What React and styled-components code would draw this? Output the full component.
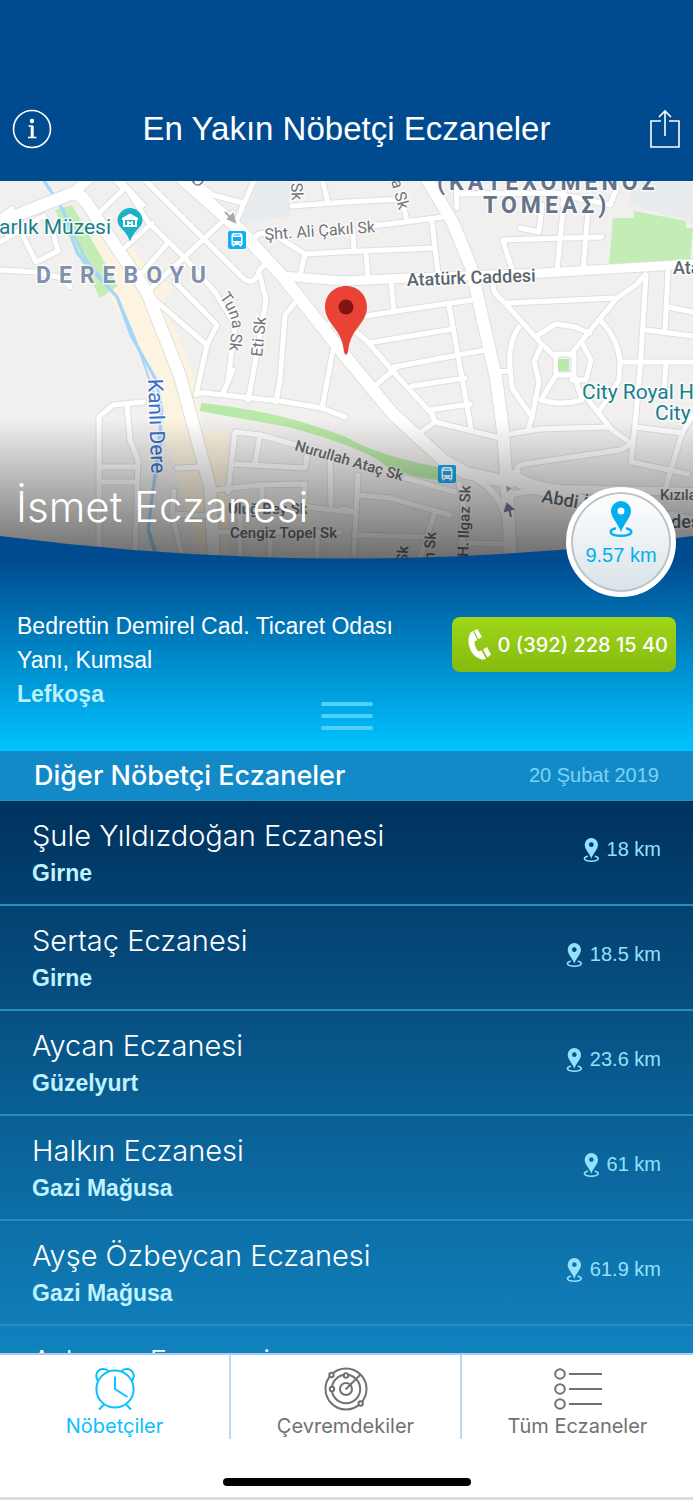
import React from "react"
import styled, { createGlobalStyle } from "styled-components"

const pharmacies = [
  { name: "Şule Yıldızdoğan Eczanesi", city: "Girne", distance: "18 km" },
  { name: "Sertaç Eczanesi", city: "Girne", distance: "18.5 km" },
  { name: "Aycan Eczanesi", city: "Güzelyurt", distance: "23.6 km" },
  { name: "Halkın Eczanesi", city: "Gazi Mağusa", distance: "61 km" },
  { name: "Ayşe Özbeycan Eczanesi", city: "Gazi Mağusa", distance: "61.9 km" },
  { name: "Aykanur Eczanesi", city: "Gazi Mağusa", distance: "62 km" },
]

// [width, path]
const roads = [
  [5, "M0 270 L35 272 L62 278 L70 287"],
  [5, "M0 217 L12 209"],
  [5, "M22 234 L36 262 L58 251 L52 228 L44 216"],
  [5, "M0 242 L40 218"],
  [5, "M100 212 L124 189 L114 178"],
  [5, "M128 190 L148 222 L184 257 L215 292 L235 325 L228 380"],
  [5, "M118 178 L143 205"],
  [5, "M143 178 L203 238 L244 279 Q255 286 259 271 L264 265"],
  [5, "M190 178 L213 195 L243 203"],
  [5, "M255 178 L236 222"],
  [5, "M122 250 L152 223 M140 275 L166 245 M147 292 L222 222 L233 213"],
  [5, "M150 296 L207 345 L217 325 L175 282"],
  [5, "M207 345 L196 395 Q197 391 214 394 L280 401 L322 408 L345 417"],
  [5, "M260 275 L266 300 L252 380 L248 400 M233 370 L223 393"],
  [5, "M322 178 L328 203 M292 206 L347 202 L402 199"],
  [5, "M255 237 Q262 229 279 238 L305 254 L340 252 L434 248 M305 254 L300 276"],
  [5, "M372 226 L405 222 L443 217 M402 200 L407 221"],
  [5, "M353 230 L354 252 M366 252 L368 278 M432 222 L438 273"],
  [5, "M391 283 L394 312 M325 325 L343 322 M366 316 L410 309 L472 300"],
  [5, "M294 304 L285 315 L280 380 L276 402 M333 350 L322 408"],
  [5, "M449 305 L457 350 L471 428 M368 343 L453 329 M394 367 L485 350"],
  [5, "M347 325 L366 340 L397 376 L432 414 L435 422 L421 432"],
  [5, "M376 385 L397 367 M412 386 L465 378 M430 410 L470 404 M435 422 L500 438"],
  [5, "M503 240 L567 238 L602 237 M503 241 L513 272"],
  [5, "M563 211 L557 270 M588 211 L583 270 M520 228 L539 232 L542 205"],
  [5, "M456 183 L457 208 M457 194 L555 193 L610 205 L617 188 M565 178 L563 205"],
  [5, "M493 283 Q492 293 503 301 L540 342 L556 358"],
  [5, "M506 303 L615 298 M645 275 L637 284 L617 298 L570 355"],
  [5, "M646 275 L640 370 L635 425 L631 462 L688 474"],
  [5, "M668 272 L665 330 M668 307 L693 312 M646 330 L693 336 M620 362 L693 362 M666 362 L664 390"],
  [5, "M519 327 Q508 342 510 368 L512 388 L532 417"],
  [5, "M601 321 Q618 339 620 362 L619 380 L600 410"],
  [5, "M535 337 L556 324 L575 327 L590 333"],
  [5, "M541 346 L534 362 L539 382 L532 417 L528 430 M582 343 L591 360 L586 380 L572 380"],
  [5, "M556 354 H574 V375 H556 Z M556 375 L541 400 Q560 406 582 400 L574 375 M582 392 L612 430 L632 444"],
  [5, "M496 372 L510 371 M504 435 L540 429 L609 427 M635 427 L683 433"],
  [5, "M518 471 Q515 466 525 464 L620 450 L631 444 M693 415 L682 433 L665 490"],
  [5, "M99 550 L99 417 L113 405 L144 402 M127 405 L130 440 L138 460 L135 550 M99 467 H136 M99 482 H136"],
  [5, "M177 468 L202 467 M174 491 L172 515 L182 555 M173 514 L210 516"],
  [5, "M228 492 L235 432 L260 435 L296 445 M260 435 L255 464 M233 464 L305 468 L308 450 M215 490 L260 485 L305 484 L304 508"],
  [5, "M262 487 V510 M308 507 L350 512 M210 532 H340 M240 512 V558 M270 535 V558 M317 533 V558"],
  [5, "M330 455 L331 505 M358 475 L354 555 M343 509 L355 512 M357 495 L390 498 L450 515 M354 535 L425 537 M434 515 L420 558"],
  [5, "M405 478 L455 492 M459 484 L463 495 L462 558 M460 543 L508 544"],
  [6, "M470 475 Q500 490 506 520 M508 495 L545 488"],
  [12, "M0 222 L68 195 Q78 190 86 202 L115 245 L147 292 L180 376 L196 435 L210 487 L214 560"],
  [10, "M72 194 L92 176"],
  [12, "M177 174 L240 230 L283 277 L350 362 L393 414 L443 460 L466 473 L508 482"],
  [9, "M283 276 L343 281 L410 278 L543 273 L643 267 L693 264"],
  [12, "M424 174 L453 223 L471 267 L496 378 L503 430 L506 473 L511 560"],
  [8, "M506 478 L533 490 L600 502 L693 520 M514 474 Q530 486 560 489 L693 492"],
]

const Bus = ({ x, y }) => (
  <g transform={`translate(${x} ${y})`}>
    <rect width="18" height="18" rx="2" fill="#12aef5" />
    <path
      fill="#fff"
      fillRule="evenodd"
      d="M6 2h6q2.500 0 2.500 2.500V14h-1v1.500h-2V14h-5v1.500h-2V14h-1V4.500Q3.500 2 6 2zM5 6v4h8V6zM6 3.500v1h6v-1zM5 11.500v1.300h1.600v-1.300zM11.400 11.500v1.300H13v-1.300z"
    />
  </g>
)

const MapDrawing = () => (
  <MapSvg viewBox="0 181 693 378" preserveAspectRatio="xMidYMid slice">
    <rect x="0" y="181" width="693" height="378" fill="#f1f0ef" />
    <path fill="#e8ecef" d="M258 181h32v35l-50 9zM633 181l-4 24 57 15 7 5v-44z" />
    <path fill="#fcf3e0" d="M88 240l20-12 24 20 16 20 25 20-10 11 32 81 8 51 25 1v128h-26l-45-148-26-80-30-50z" />
    <path fill="#c3edb4" d="M55 210l17-5 46 81-18 12zM613 218h21v-7l52 10v7h7l-3 32-81 5z" />
    <path fill="#b9e9a8" d="M201 403q75 7 145 34 30 18 92 30v13q-30-3-52-14-20-18-98-39l-88-16z" />
    <g fill="none" stroke="#a3d5fd" strokeWidth="3">
      <path d="M43 179l20 31 14 43 40 44 14 38 25 45 6 30-4 40-10 80 9 30" />
      <path d="M63 210l22 48 33 40 16 38 26 74 2 30-11 65-2 25 10 30" strokeWidth="2" />
    </g>
    <g fill="none" strokeLinecap="round" strokeLinejoin="round">
      <g stroke="#dfdfdf">
        {roads.map(([width, d]) => (
          <path key={d} d={d} strokeWidth={width + 2} />
        ))}
      </g>
      <g stroke="#fff">
        {roads.map(([width, d]) => (
          <path key={d} d={d} strokeWidth={width} />
        ))}
      </g>
    </g>
    <rect x="558" y="359" width="11" height="12" fill="#b9e9a8" />
    <g stroke="#aaa" strokeWidth="2" fill="#aaa">
      <path d="M225 212l7 7" />
      <path d="M235 222l-2-8-5 5z" />
    </g>
    <g stroke="#7d7d99" strokeWidth="2" fill="#7d7d99">
      <path d="M511 517l-2-9" />
      <path d="M507 504l-2 7 8-2z" />
    </g>
    <path d="M506 486l6 2-5 4z" fill="#aaa" />
    <Bus x={228} y={231} />
    <Bus x={438} y={465} />

    <MapText fill="#8190ad" $size={23} $weight={700} $spacing={8}>
      <text x="36" y="283">DEREBOYU</text>
    </MapText>
    <MapText fill="#667389" $size={23} $weight={700} $spacing={4}>
      <text x="437" y="190">(ΚΑΤΕΧΟΜΕΝΟΣ</text>
      <text x="483" y="213">ΤΟΜΕΑΣ)</text>
    </MapText>
    <MapText fill="#18808a" $size={21} $weight={400}>
      <text x="111" y="234" textAnchor="end">Barbarlık Müzesi</text>
      <text x="582" y="399">City Royal Hotel</text>
      <text x="655" y="420">City Royal</text>
    </MapText>
    <MapText fill="#5a6670" $size={18} $weight={500}>
      <text transform="translate(407 286) rotate(-2)">Atatürk Caddesi</text>
      <text x="673" y="274">Atatürk</text>
      <text transform="translate(541 502) rotate(10)">Abdi İpekçi</text>
      <text x="671" y="528">desi</text>
    </MapText>
    <path id="tuna" d="M219 297 Q231 312 232 326 L229 352" fill="none" />
    <MapText fill="#70757a" $size={16} $weight={400}>
      <text transform="translate(265 240) rotate(-4)">Şht. Ali Çakıl Sk</text>
      <text>
        <textPath href="#tuna">Tuna Sk</textPath>
      </text>
      <text transform="translate(262 357) rotate(-84)">Eti Sk</text>
      <text transform="translate(291 183) rotate(87)">Sk</text>
      <text transform="translate(391 181) rotate(75)">a Sk</text>
      <text transform="translate(191 181) rotate(45)">D</text>
    </MapText>
    <MapText fill="#666b70" $size={15} $weight={500} $halo={0.3}>
      <text transform="translate(294 450) rotate(16)">Nurullah Ataç Sk</text>
      <text x="228" y="514">Uluğ Bey Sk</text>
      <text x="230" y="538">Cengiz Topel Sk</text>
      <text x="660" y="500">Kızılay</text>
      <text transform="translate(468 557) rotate(-88)">H. Ilgaz Sk</text>
      <text transform="translate(434 561) rotate(-86)">n Sk</text>
      <text transform="translate(407 563) rotate(-86)">Sk</text>
    </MapText>
    <MapText fill="#3b6fc4" $size={21} $weight={400}>
      <text transform="translate(148 379) rotate(88)">Kanlı Dere</text>
    </MapText>

    <path
      fill="#18b4c4"
      d="M130 208a12.500 12.500 0 0 1 12.500 12.500c0 7-9 10-12.500 21-3.500-11-12.500-14-12.500-21A12.500 12.500 0 0 1 130 208z"
    />
    <path fill="#fff" fillRule="evenodd" d="M122 218l8-4.500 8 4.500v2h-1v7h-14v-7h-1zM125 220v5h10v-5zM127 221h2v1h2v-1h2v4h-2v-1h-2v1h-2z" />
    <path
      fill="#ea4335"
      d="M346 286c12 0 21 9 21 21 0 9-5 15-11 23-5 7-7 13-8 22q-2 6-4 0c-1-9-3-15-8-22-6-8-11-14-11-23 0-12 9-21 21-21z"
    />
    <circle cx="346" cy="307" r="7.500" fill="#811411" />
  </MapSvg>
)

const PinIcon = () => (
  <svg viewBox="0 0 22 36" fill="currentColor" aria-hidden="true">
    <path
      fillRule="evenodd"
      d="M11 0a10 10 0 0 1 10 10c0 7-7 12-10 21C8 22 1 17 1 10A10 10 0 0 1 11 0zm0 6.500a3.500 3.500 0 1 0 0 7 3.500 3.500 0 1 0 0-7z"
    />
    <path
      d="M5 27.500c-7 2-6 7 6 7.300 12-.3 13-5.300 6-7.300"
      fill="none"
      stroke="currentColor"
      strokeWidth="2.400"
      strokeLinecap="round"
    />
  </svg>
)

const ClockIcon = () => (
  <svg viewBox="0 0 44 44" width="44" height="44" aria-hidden="true">
    <circle cx="22" cy="22" r="18.600" />
    <path d="M22 9.500V22l12.500 8M11 37.500l-5 5M33 37.500l5 5" />
    <path d="M5.500 14.500C.5 8 5 1.500 11 2c2 0 3.500 1 4.500 2.200M38.500 14.500C43.500 8 39 1.500 33 2c-2 0-3.500 1-4.500 2.200" />
  </svg>
)

const RadarIcon = () => (
  <svg viewBox="0 0 44 44" width="44" height="44" aria-hidden="true">
    <circle cx="22" cy="22" r="20.500" />
    <circle cx="22" cy="22" r="14.200" />
    <circle cx="22" cy="22" r="6" />
    <path d="M21.500 22.500L36 8" />
    <g fill="#fff">
      <circle cx="7.500" cy="8" r="2.200" />
      <circle cx="22" cy="8.500" r="2.200" />
      <circle cx="8" cy="22" r="2.200" />
      <circle cx="36.700" cy="36.500" r="2.200" />
    </g>
  </svg>
)

const ListIcon = () => (
  <svg viewBox="0 0 50 44" width="50" height="44" aria-hidden="true">
    {[7, 22, 37].map((y) => (
      <g key={y}>
        <circle cx="7" cy={y} r="4.800" />
        <path d={`M16 ${y}h33`} />
      </g>
    ))}
  </svg>
)

const tabs = [
  { label: "Nöbetçiler", icon: ClockIcon, active: true },
  { label: "Çevremdekiler", icon: RadarIcon },
  { label: "Tüm Eczaneler", icon: ListIcon },
]

const App = () => {
  return (
    <Screen>
      <GlobalStyle />

      <Header>
        <IconButton aria-label="Bilgi" $side="flex-start">
          <svg width="40" height="40" viewBox="0 0 40 40" fill="none" stroke="#fff" strokeWidth="1.600">
            <circle cx="20" cy="20" r="18.500" />
            <circle cx="20" cy="12" r="2.200" fill="#fff" stroke="none" />
            <path d="M16.500 17H20v11.500M16 28.500h8.500" />
            <path d="M20.200 17v11.500" strokeWidth="3" />
          </svg>
        </IconButton>
        <Title>En Yakın Nöbetçi Eczaneler</Title>
        <IconButton aria-label="Paylaş" $side="flex-end">
          <svg width="32" height="40" viewBox="0 0 32 40" fill="none" stroke="#fff" strokeWidth="1.600">
            <path d="M12 12H2v26h28V12H20M16 27V2M10 8l6-6 6 6" />
          </svg>
        </IconButton>
      </Header>

      <MapArea>
        <MapDrawing />
        <Shade />
        <Curve viewBox="0 0 693 24" preserveAspectRatio="none" aria-hidden="true">
          <path d="M0 0Q346 45 693 0V24H0Z" fill="#004b8f" />
        </Curve>
        <NearestName>İsmet Eczanesi</NearestName>
        <DistanceBadge>
          <PinIcon />
          9.57 km
        </DistanceBadge>
      </MapArea>

      <Details>
        <Address>
          Bedrettin Demirel Cad. Ticaret Odası Yanı, Kumsal
          <strong>Lefkoşa</strong>
        </Address>
        <CallButton>
          <svg width="24" height="32" viewBox="0 0 24 32" fill="#fff" aria-hidden="true">
            <path d="M4 3C-1 10 1 27 15 30.500q3 .5 4-1l-4.500-8q-2 .5-3 1C9 20 7.500 16 7.500 12.500l3-1.500L6 2z" />
            <path d="M7 1.500L10.500 0 15 8l-3.500 2zM16 20.500l4-2.500 4 7.500-3.500 3z" />
          </svg>
          0 (392) 228 15 40
        </CallButton>
        <Handle aria-label="Listeyi sürükle">
          <i />
          <i />
          <i />
        </Handle>
      </Details>

      <SectionBar>
        <h2>Diğer Nöbetçi Eczaneler</h2>
        <time dateTime="2019-02-20">20 Şubat 2019</time>
      </SectionBar>

      <List>
        {pharmacies.map((item) => (
          <Row key={item.name}>
            <div>
              <Name>{item.name}</Name>
              <City>{item.city}</City>
            </div>
            <Distance>
              <PinIcon />
              {item.distance}
            </Distance>
          </Row>
        ))}
      </List>

      <Footer>
        <TabBar>
          {tabs.map(({ label, icon: Icon, active }) => (
            <Tab key={label} href="#" $active={active}>
              <Icon />
              {label}
            </Tab>
          ))}
        </TabBar>
        <HomeIndicator />
      </Footer>
    </Screen>
  )
}

const GlobalStyle = createGlobalStyle`
  * {
    box-sizing: border-box;
  }

  body {
    margin: 0;
    font-family: "Liberation Sans", Arial, sans-serif;
  }

  h1, h2, h3, p, ul {
    margin: 0;
    padding: 0;
  }

  button {
    border: none;
    background: none;
    padding: 0;
    font-family: inherit;
    cursor: pointer;
  }
`

const Screen = styled.div`
  display: flex;
  flex-direction: column;
  height: 100vh;
  background: #fff;
`

const Header = styled.header`
  display: flex;
  align-items: center;
  justify-content: space-between;
  padding: 76px 12px 0;
  background: #004b8f;

  height: 181px;
  flex-shrink: 0;
`

const IconButton = styled.button`
  display: flex;
  width: 40px;
  justify-content: ${(props) => props.$side};
`

const Title = styled.h1`
  color: #fff;
  font-size: 33px;
  font-weight: 400;
`

const MapArea = styled.section`
  position: relative;
  height: 378px;
  flex-shrink: 0;
`

const MapSvg = styled.svg`
  display: block;
  width: 100%;
  height: 100%;
`

const MapText = styled.g`
  font-family: Roboto, sans-serif;
  font-size: ${(props) => props.$size}px;
  font-weight: ${(props) => props.$weight};
  letter-spacing: ${(props) => props.$spacing || 0}px;
  stroke: rgba(255, 255, 255, ${(props) => props.$halo || 0.7});
  stroke-width: 3px;
  paint-order: stroke;
`

const Shade = styled.div`
  position: absolute;
  inset: auto 0 0;
  height: 140px;
  background: linear-gradient(transparent, rgba(0, 0, 0, 0.55));
`

const Curve = styled.svg`
  position: absolute;
  left: 0;
  bottom: -1px;
  width: 100%;
  height: 24px;
`

const NearestName = styled.h2`
  position: absolute;
  left: 16px;
  bottom: 24px;
  color: #fff;
  font-family: Inter, sans-serif;
  font-size: 42px;
  line-height: 56px;
  font-weight: 300;
`

const DistanceBadge = styled.div`
  position: absolute;
  right: 17px;
  bottom: -38px;
  z-index: 1;
  display: flex;
  flex-direction: column;
  align-items: center;
  gap: 6px;
  width: 110px;
  height: 110px;
  padding-top: 9px;
  border-radius: 50%;
  border: 5px solid #fff;
  box-shadow: inset 0 0 0 2px #bcc2c6;
  background: linear-gradient(#fff, #d8e3e8);
  color: #05aef0;
  font-size: 20px;
  line-height: 24px;

  svg {
    display: block;
    height: 36px;
    flex-shrink: 0;
    overflow: visible;
  }
`

const Details = styled.section`
  display: grid;
  grid-template-columns: minmax(0, 400px) auto;
  justify-content: space-between;
  align-items: start;
  padding: 50px 17px 21px;
  background: linear-gradient(#004b8f, #00c3ff);
  flex-shrink: 0;
`

const Address = styled.p`
  grid-area: 1 / 1;
  padding-bottom: 19px;
  color: #fff;
  font-size: 23px;
  line-height: 34px;

  strong {
    display: block;
    color: #bdf0ff;
  }
`

const CallButton = styled.button`
  grid-area: 1 / 2;
  display: flex;
  align-items: center;
  gap: 7px;
  height: 55px;
  margin-top: 8px;
  padding: 0 8px 0 15px;
  border-radius: 8px;
  background: linear-gradient(#9fd719, #85ba0f);
  color: #fff;
  font-family: Inter, sans-serif;
  font-size: 20px;
  font-weight: 500;
`

const Handle = styled.button`
  grid-area: 1 / 1 / 2 / 3;
  align-self: end;
  justify-self: center;
  display: grid;
  gap: 8px;

  i {
    width: 52px;
    height: 4px;
    border-radius: 2px;
    background: #4fd0ff;
  }
`

const SectionBar = styled.div`
  display: flex;
  align-items: center;
  justify-content: space-between;
  height: 50px;
  padding: 0 34px;
  background: #138ac8;
  border-bottom: 1px solid #2792c8;
  flex-shrink: 0;

  h2 {
    color: #fff;
    font-family: Inter, sans-serif;
    font-size: 27px;
    font-weight: 500;
  }

  time {
    color: #7dd3f5;
    font-size: 20px;
  }
`

const List = styled.ul`
  flex: 1;
  min-height: 0;
  overflow-y: auto;
  scrollbar-width: none;
  list-style: none;
  background: linear-gradient(#00325e, #1182be);
`

const Row = styled.li`
  display: flex;
  align-items: center;
  justify-content: space-between;
  padding: 14px 32px 15px;
  border-bottom: 2px solid #2390be;
`

const Name = styled.h3`
  color: #fff;
  font-family: Inter, sans-serif;
  font-size: 29px;
  line-height: 42px;
  font-weight: 300;
`

const City = styled.p`
  color: #c0f2ff;
  font-size: 23px;
  line-height: 32px;
  font-weight: 700;
`

const Distance = styled.span`
  display: flex;
  align-items: center;
  gap: 8px;
  margin-bottom: 5px;
  color: #92e2fd;
  font-size: 20px;

  svg {
    height: 24px;
    overflow: visible;
  }
`

const Footer = styled.footer`
  height: 147px;
  flex-shrink: 0;
  border-top: 2px solid #a8d0ea;
  border-bottom: 3px solid #ddd;
`

const TabBar = styled.nav`
  display: grid;
  grid-template-columns: repeat(3, 1fr);
  height: 83px;
`

const Tab = styled.a`
  display: flex;
  flex-direction: column;
  align-items: center;
  gap: 2px;
  padding-top: 12px;
  color: ${(props) => (props.$active ? "#0bc0fc" : "#717171")};
  font-family: Inter, sans-serif;
  font-size: 20px;
  line-height: 26px;
  text-decoration: none;

  &:not(:last-child) {
    border-right: 2px solid #bcdaed;
  }

  svg {
    fill: none;
    stroke: currentColor;
    stroke-width: 2;
  }
`

const HomeIndicator = styled.div`
  width: 248px;
  height: 8px;
  margin: 40px auto 0;
  border-radius: 4px;
  background: #000;
`

export default App
